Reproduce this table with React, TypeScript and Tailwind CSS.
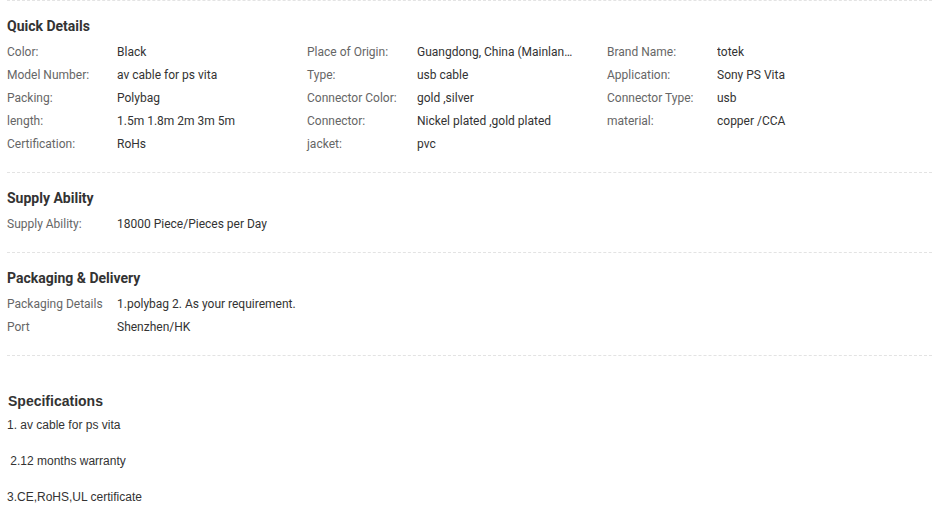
import React from "react";

// Product detail attributes, three label/value pairs per line
const quickDetails: [string, string][] = [
	["Color:", "Black"],
	["Place of Origin:", "Guangdong, China (Mainland)"],
	["Brand Name:", "totek"],
	["Model Number:", "av cable for ps vita"],
	["Type:", "usb cable"],
	["Application:", "Sony PS Vita"],
	["Packing:", "Polybag"],
	["Connector Color:", "gold ,silver"],
	["Connector Type:", "usb"],
	["length:", "1.5m 1.8m 2m 3m 5m"],
	["Connector:", "Nickel plated ,gold plated"],
	["material:", "copper /CCA"],
	["Certification:", "RoHs"],
	["jacket:", "pvc"],
];

const supply: [string, string][] = [["Supply Ability:", "18000 Piece/Pieces per Day"]];

const packaging: [string, string][] = [
	["Packaging Details", "1.polybag 2. As your requirement."],
	["Port", "Shenzhen/HK"],
];

function Section({
	title,
	items,
	columns,
}: {
	title: string;
	items: [string, string][];
	columns?: boolean;
}) {
	return (
		<div className="border-t border-dashed border-[#e3e3e3] pb-[16px] pt-[15px]">
			<h3 className="h-[20px] text-[14px] font-bold leading-[20px] text-[#333]">{title}</h3>
			<div className={`mt-[5px] ${columns ? "grid grid-cols-[300px_300px_300px]" : "flex flex-col"}`}>
				{items.map(([label, value]) => (
					<div key={label} className="flex h-[23px] items-center text-[12px] leading-[23px]">
						<span className="w-[110px] shrink-0 text-[#666]">{label}</span>
						<span className={columns ? "w-[158px] truncate text-[#333]" : "text-[#333]"}>
							{value}
						</span>
					</div>
				))}
			</div>
		</div>
	);
}

export default function App() {
	return (
		<div className="min-h-screen bg-white pl-[7px] pr-[2px] font-['Roboto',sans-serif]">
			<Section title="Quick Details" items={quickDetails} columns />
			<Section title="Supply Ability" items={supply} />
			<Section title="Packaging & Delivery" items={packaging} />
			<div className="border-t border-dashed border-[#e3e3e3] pt-[36px] font-['Liberation_Sans',Arial,sans-serif] text-[#333]">
				<h3 className="pl-[1px] text-[14px] font-bold leading-[18px]">Specifications</h3>
				<div className="mt-[6px] text-[12px] leading-[18px]">
					<p>1. av cable for ps vita</p>
					<p className="mt-[18px]">&nbsp;2.12 months warranty</p>
					<p className="mt-[18px]">3.CE,RoHS,UL certificate</p>
				</div>
			</div>
		</div>
	);
}
